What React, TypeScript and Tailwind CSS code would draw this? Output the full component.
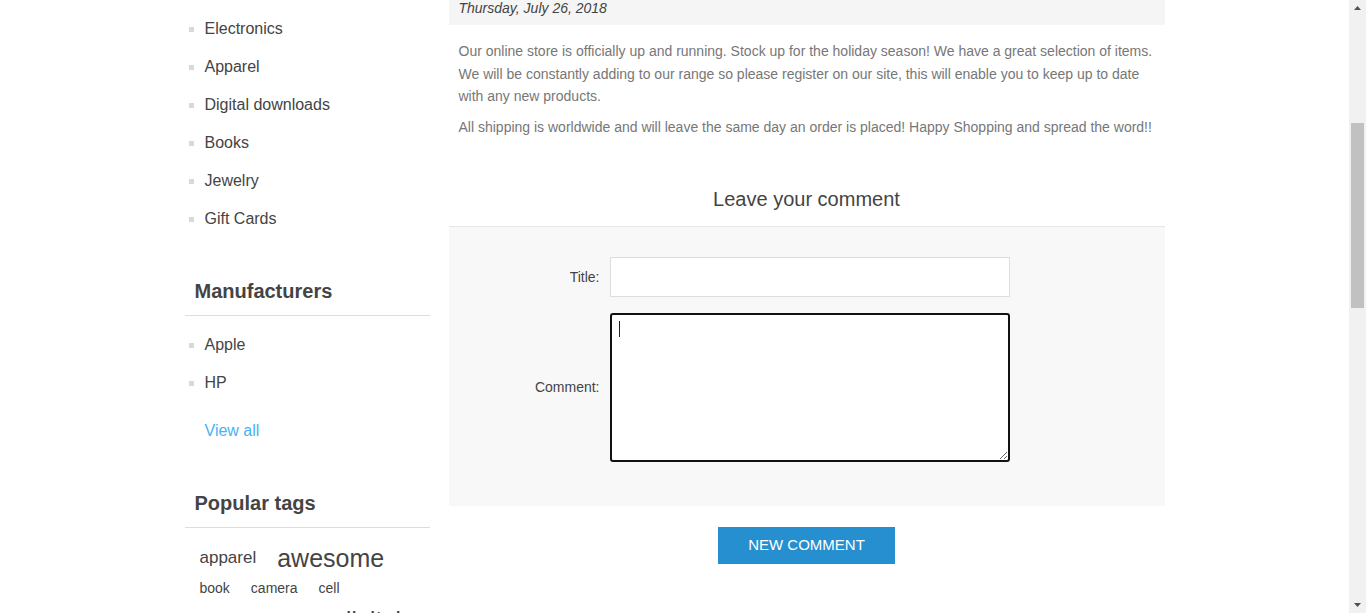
const categories = ["Electronics", "Apparel", "Digital downloads", "Books", "Jewelry", "Gift Cards"];
const manufacturers = ["Apple", "HP"];

const tags = [
  { name: "apparel", cls: "text-[17px] leading-[30px]" },
  { name: "awesome", cls: "text-[25px] leading-[30px]" },
  { name: "book", cls: "text-[14px] leading-[30px]" },
  { name: "camera", cls: "text-[14px] leading-[30px]" },
  { name: "cell", cls: "text-[14px] leading-[30px]" },
  { name: "computer", cls: "text-[17px] leading-[30px]" },
  { name: "cool", cls: "text-[14px] leading-[30px]" },
  { name: "digital", cls: "text-[24px] leading-[34px]" },
];

function Bullet({ label }: { label: string }) {
  return (
    <li className="flex items-center py-[9px] leading-[20px]">
      <span className="ml-[4px] mr-[11px] h-[5px] w-[5px] bg-[#d9d9d9]" />
      <a className="text-[16px] text-[#444]">{label}</a>
    </li>
  );
}

function Sidebar() {
  return (
    <aside className="w-[245px] shrink-0 pt-[10px]">
      <ul>
        {categories.map((c) => (
          <Bullet key={c} label={c} />
        ))}
      </ul>

      {/* Manufacturers */}
      <div className="mt-[41px]">
        <h3 className="border-b border-[#ddd] pb-[12px] pl-[10px] text-[20px] font-bold leading-[24px] text-[#444]">
          Manufacturers
        </h3>
        <ul className="mt-[10px]">
          {manufacturers.map((m) => (
            <Bullet key={m} label={m} />
          ))}
        </ul>
        <div className="mt-[19px] pl-[20px] text-[16px] leading-[20px] text-[#4ab2f1]">View all</div>
      </div>

      {/* Popular tags */}
      <div className="mt-[50px]">
        <h3 className="border-b border-[#ddd] pb-[12px] pl-[10px] text-[20px] font-bold leading-[24px] text-[#444]">
          Popular tags
        </h3>
        <ul className="flex w-[235px] flex-wrap items-center gap-x-[21px] pl-[15px] pt-[15px]">
          {tags.map((t) => (
            <li key={t.name} className={`text-[#444] ${t.cls}`}>
              {t.name}
            </li>
          ))}
        </ul>
      </div>
    </aside>
  );
}

function Main() {
  return (
    <main className="ml-[19px] w-[716px] shrink-0">
      <div className="mt-[-12px] bg-[#f5f5f5] px-[10px] pb-[7px] pt-[10px] text-[14px] italic leading-[20px] text-[#444]">
        Thursday, July 26, 2018
      </div>
      <div className="px-[10px] pt-[15px] text-[14px] leading-[22.5px] text-[#777]">
        <p>
          Our online store is officially up and running. Stock up for the holiday season! We have a great selection of
          items. We will be constantly adding to our range so please register on our site, this will enable you to keep
          up to date with any new products.
        </p>
        <p className="mt-[8px]">
          All shipping is worldwide and will leave the same day an order is placed! Happy Shopping and spread the word!!
        </p>
      </div>

      {/* Comment form */}
      <div className="mt-[49px]">
        <h2 className="border-b border-[#e6e6e6] pb-[15px] text-center text-[20px] leading-[24px] text-[#444]">
          Leave your comment
        </h2>
        <div className="bg-[#f8f8f8] pb-[44px] pt-[30px]">
          <div className="flex items-center">
            <label className="w-[151px] text-right text-[14px] text-[#444]">Title:</label>
            <input className="ml-[10px] h-[40px] w-[400px] border border-[#ddd] bg-white px-[10px] outline-none" />
          </div>
          <div className="mt-[16px] flex items-center">
            <label className="w-[151px] text-right text-[14px] text-[#444]">Comment:</label>
            <div className="relative ml-[10px]">
              <textarea className="block h-[149px] w-[400px] rounded-[3px] border-2 border-[#111] bg-white outline-none" />
              <span className="absolute left-[9px] top-[8px] h-[16px] w-px bg-[#222]" />
            </div>
          </div>
        </div>
        <div className="flex justify-center pt-[21px]">
          <button className="h-[37px] bg-[#258fd0] px-[30px] text-[15px] uppercase text-white">New comment</button>
        </div>
      </div>
    </main>
  );
}

function Scrollbar() {
  return (
    <div className="flex h-[613px] w-[17px] shrink-0 flex-col items-center bg-[#f1f1f1]">
      <svg width="17" height="17" viewBox="0 0 17 17" className="shrink-0">
        <path d="M5 10 L8.5 6 L12 10 Z" fill="#505050" />
      </svg>
      <div className="mt-[106px] h-[185px] w-[13px] bg-[#c1c1c1]" />
      <div className="flex-1" />
      <svg width="17" height="17" viewBox="0 0 17 17" className="shrink-0">
        <path d="M5 7 L8.5 11 L12 7 Z" fill="#505050" />
      </svg>
    </div>
  );
}

export default function App() {
  return (
    <div className="flex h-[613px] w-[1366px] overflow-hidden bg-white font-['Liberation_Sans',Arial,sans-serif]">
      <div className="h-[613px] flex-1 overflow-hidden">
        <div className="mx-auto flex w-[980px]">
          <Sidebar />
          <Main />
        </div>
      </div>
      <Scrollbar />
    </div>
  );
}
